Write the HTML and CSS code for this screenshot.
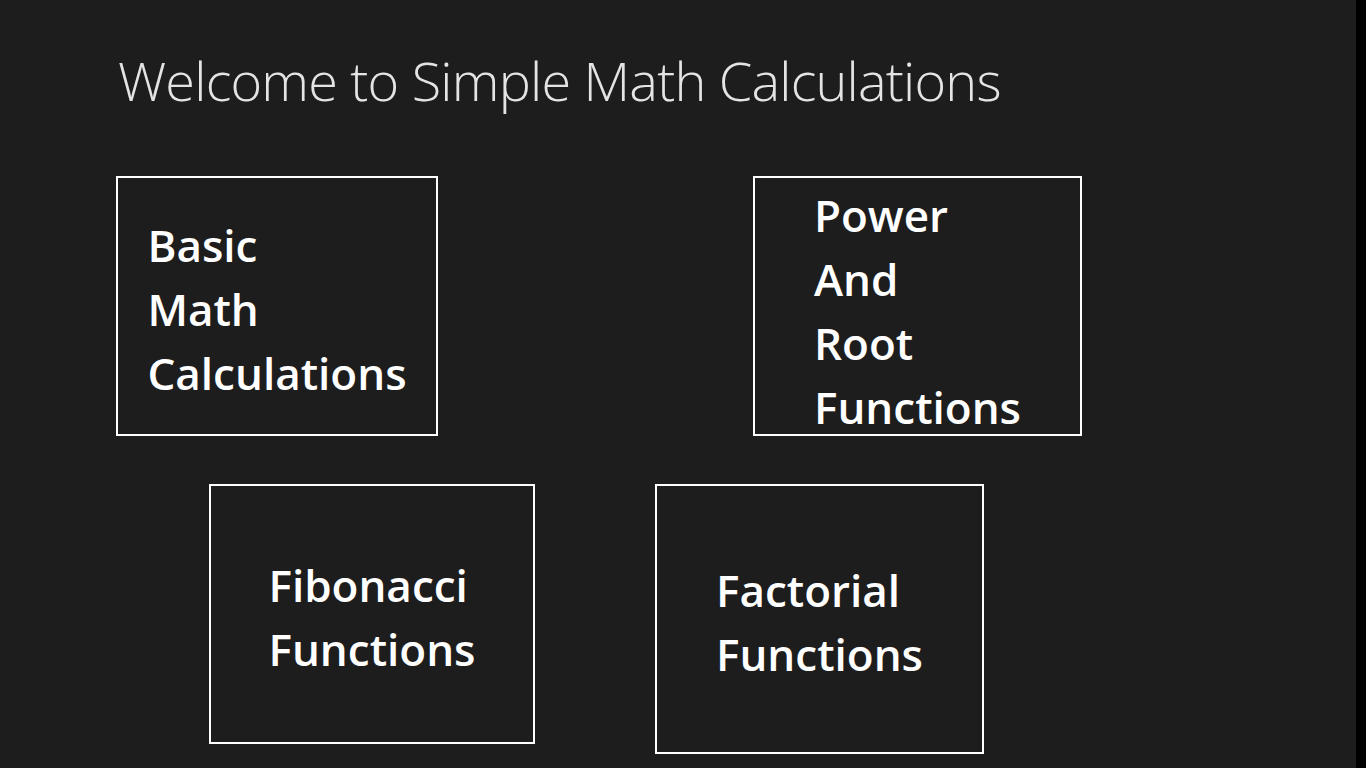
FILE: index.html
```html
<!DOCTYPE html>
<html lang="en">
<head>
<meta charset="utf-8">
<title>Simple Math Calculations</title>
<link rel="stylesheet" href="styles.css">
</head>
<body>
<div class="app">
  <main class="page">
    <h1 class="title">Welcome to Simple Math Calculations</h1>
    <div class="row row-top">
      <button class="tile tile-basic"><span class="label">Basic<br>Math<br>Calculations</span></button>
      <button class="tile tile-power"><span class="label">Power<br>And<br>Root<br>Functions</span></button>
    </div>
    <div class="row row-bottom">
      <button class="tile tile-fib"><span class="label">Fibonacci<br>Functions</span></button>
      <button class="tile tile-fact"><span class="label">Factorial<br>Functions</span></button>
    </div>
  </main>
  <div class="edge"></div>
</div>
</body>
</html>
```
FILE: styles.css
```css
html, body {
  margin: 0;
  padding: 0;
  background: #000;
}
.app {
  display: flex;
  width: 1366px;
  height: 768px;
  overflow: hidden;
}
.page {
  flex: 1;
  background: #1d1d1d;
  display: flex;
  flex-direction: column;
}
.edge {
  width: 10px;
  background: #000;
}
.title {
  margin: 40px 0 0 0;
  padding-left: 118px;
  font-family: "Open Sans", "Noto Sans", sans-serif;
  font-weight: 300;
  font-size: 54px;
  letter-spacing: -0.8px;
  line-height: 80px;
  color: #e4e4e4;
  white-space: nowrap;
}
.row {
  display: flex;
  align-items: flex-start;
}
.row-top {
  margin-top: 56px;
  padding-left: 116px;
  gap: 315px;
}
.row-bottom {
  margin-top: 48px;
  padding-left: 209px;
  gap: 120px;
}
.tile {
  box-sizing: border-box;
  border: 2px solid #fff;
  background: transparent;
  color: #fff;
  padding: 5px 0 0 0;
  margin: 0;
  display: flex;
  align-items: center;
  justify-content: center;
  font-family: "Open Sans", "Noto Sans", sans-serif;
  font-weight: 600;
  font-size: 44px;
  line-height: 64px;
  text-align: left;
}
.tile-power { padding-top: 10px; }
.label {
  display: block;
  white-space: nowrap;
}
.tile-basic { width: 322px; height: 260px; }
.tile-power { width: 329px; height: 260px; }
.tile-fib { width: 326px; height: 260px; }
.tile-fact { width: 329px; height: 270px; }
```
